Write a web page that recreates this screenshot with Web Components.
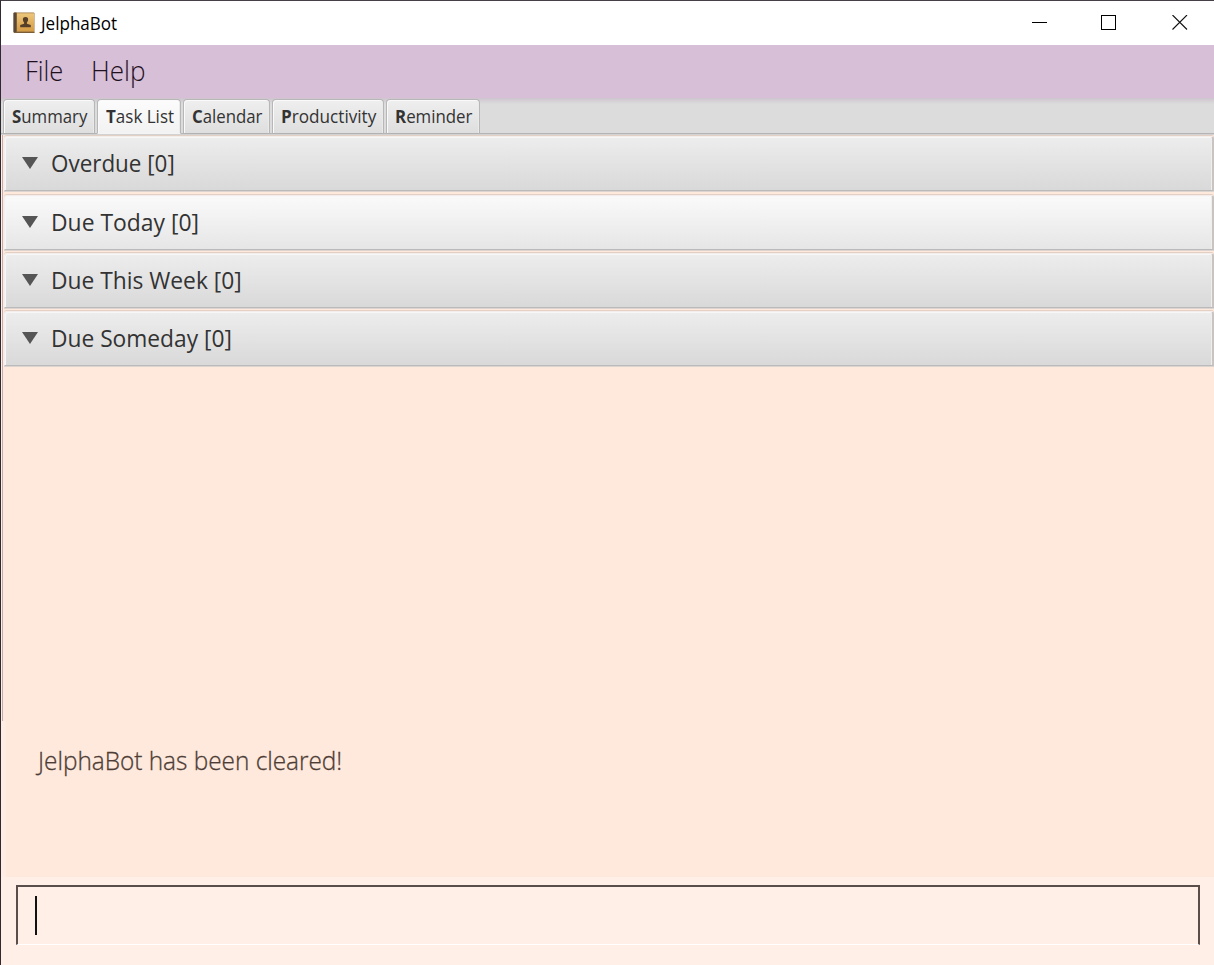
<!DOCTYPE html>
<html lang="en"><head><meta charset="utf-8"><title>JelphaBot</title>
<style>html,body{margin:0;height:100%;overflow:hidden}body{font-family:"Open Sans","Noto Sans",sans-serif}</style></head>
<body><jelpha-app></jelpha-app>
<script>
const define=(name,html,init)=>customElements.define(name,class extends HTMLElement{
  constructor(){super();this.attachShadow({mode:'open'}).innerHTML=html}
  connectedCallback(){if(init)init(this,this.shadowRoot)}
});
// Text label condensed to a given width
define('fit-text','<style>:host{display:block;white-space:nowrap;flex:none}span{display:inline-block;transform-origin:0 50%}</style><span><slot></slot></span>',(el,r)=>{
  const w=+el.getAttribute('width'),s=r.querySelector('span');
  el.style.width=w+'px';
  const n=s.offsetWidth;if(n)s.style.transform=`scaleX(${w/n})`;
});
define('title-bar',`<style>
:host{display:flex;height:44px;background:#fff;color:#000;align-items:center;font-size:17.5px;line-height:44px}
.icon{margin:0 6px 0 12px;flex:none}.controls{margin-left:auto;display:flex;gap:54px;padding-right:26px;margin-top:-2px}
.controls svg{display:block}.controls svg:last-child{margin-left:2px}</style>
<svg class="icon" width="22" height="22" viewBox="0 0 22 22"><defs><linearGradient id="g" x2="0" y2="1"><stop stop-color="#edc77c"/><stop offset="1" stop-color="#d59c45"/></linearGradient></defs><rect x=".5" y=".5" width="21" height="20.5" rx="1" fill="#a07a42"/><rect x="4" y="1.3" width="17" height="18" fill="url(#g)"/><path d="M.5 1.5Q.5.5 1.5.5H3.500V20.500H1.500Q.5 20.500.5 19.500Z" fill="#59483a"/><path d="M1 20.500H21.500" stroke="#7b5e38"/><path d="M12.500 5c2 0 2.800 1.300 2.600 3-.1 1.200-.8 2-1.200 2.600v1.200l3.900 1.200v2.200H7.200v-2.200l3.900-1.200v-1.200C10.700 10 10 9.200 9.900 8 9.700 6.300 10.500 5 12.500 5Z" fill="#553f28"/></svg>
<fit-text width="76">JelphaBot</fit-text>
<div class="controls"><svg width="15" height="15" shape-rendering="crispEdges"><path d="M0 7.500H15" stroke="#000"/></svg><svg width="15" height="15" shape-rendering="crispEdges"><rect x=".5" y=".5" width="14" height="14" fill="none" stroke="#000"/></svg><svg width="16" height="15"><path d="M.5 0L15 14.500M15 .0L.5 14.500" stroke="#111" stroke-width="1.100"/></svg></div>`);
define('menu-bar',`<style>:host{display:flex;height:53px;background:#d6bfd7;padding-left:24px;gap:28px;font-size:27.500px;font-weight:300;line-height:51px;color:#1e101e}</style>
<fit-text width="38">File</fit-text><fit-text width="54">Help</fit-text>`);
define('tab-item',`<style>:host{display:block;box-sizing:border-box;height:35px;border:1px solid #b7b7b7;border-bottom-color:#b2b2b2;border-radius:4px 4px 0 0;background:linear-gradient(#efefef,#dedede);box-shadow:inset 1px 1px #fafafa,inset -1px 0 #eaeaea;font-size:17.5px;line-height:33px;padding-left:7.500px;color:#333}
:host([selected]){background:linear-gradient(#fcfcfc,#f2f2f2);border-bottom-color:#f4f4f4}</style><slot></slot>`,el=>{el.style.width=el.getAttribute('width')+'px'});
define('tab-strip',`<style>:host{display:flex;box-sizing:border-box;height:37px;padding:1px 0 0 2px;gap:2px;background:linear-gradient(#cfc4cf 0,#dcdcdc 6px,#dcdcdc 35px,#b5b5b5 35px,#b5b5b5 36px,#d2d2d2 36px)}b{font-weight:700}tab-item{margin-top:-.5px}</style>
<tab-item width="92"><fit-text width="75">Summary</fit-text></tab-item><tab-item width="84" selected><fit-text width="68">Task List</fit-text></tab-item><tab-item width="87"><fit-text width="70">Calendar</fit-text></tab-item><tab-item width="112"><fit-text width="95">Productivity</fit-text></tab-item><tab-item width="94"><fit-text width="77">Reminder</fit-text></tab-item>`.replace(/(<fit-text width="\d+">)(\w)/g,'$1<b>$2</b>'));
define('task-group',`<style>:host{display:flex;box-sizing:border-box;height:55px;align-items:center;gap:13px;padding-left:17px;border:1px solid #bababa;border-top-color:#f3eeeb;border-left-color:#f4f0ee;border-right:2px solid #c9c4c2;border-radius:3px 3px 0 0;background:linear-gradient(#ededed,#d9d9d9);box-shadow:inset 1px 1px #f7f7f7,inset -1px 0 #eee,0 -1px #e4cfc5,0 1px #dcd4d0;color:#333;font-size:23.5px;line-height:52px}
:host([light]){background:linear-gradient(#fafafa,#e6e6e6)}svg{flex:none;margin-top:-1px}::slotted(*){height:53px}</style><svg width="16" height="12"><path d="M0 0H16L8 12Z" fill="#555"/></svg><slot></slot>`);
define('task-list',`<style>:host{display:flex;flex-direction:column;box-sizing:border-box;height:586px;padding:1px 0 0 1px;margin-left:1px;gap:3px;background:#ffe8dc;border-left:1px solid #c0adb0}task-group:first-of-type{margin-bottom:1px}</style>
<task-group><fit-text width="124">Overdue [0]</fit-text></task-group><task-group light><fit-text width="148">Due Today [0]</fit-text></task-group><task-group><fit-text width="191">Due This Week [0]</fit-text></task-group><task-group><fit-text width="181">Due Someday [0]</fit-text></task-group>`);
define('result-display',`<style>:host{display:block;box-sizing:border-box;height:156px;border-left:5px solid #ffece2;background:#ffe8dc;padding:17px 0 0 32px;color:#4c3c35;font-size:25px;font-weight:300;-webkit-text-stroke:.3px #4c3c35;line-height:44px}</style><fit-text width="304">JelphaBot has been cleared!</fit-text>`);
define('command-box',`<style>:host{display:block;box-sizing:border-box;height:88px;background:#ffefe6;padding:8px 14px 0 15px}.field{box-sizing:border-box;height:60px;border:2px solid #5a4e4a;border-bottom:1px solid #fff;padding:9px 0 0 16.500px}.caret{width:2px;height:39px;background:#111}</style><div class="field"><div class="caret"></div></div>`);
define('jelpha-app',`<style>:host{display:block;box-sizing:border-box;height:965px;border-top:1px solid #444046;border-left:1px solid #302a30;background:#ffefe6;overflow:hidden}</style>
<title-bar></title-bar><menu-bar></menu-bar><tab-strip></tab-strip><task-list></task-list><result-display></result-display><command-box></command-box>`);
</script></body></html>
